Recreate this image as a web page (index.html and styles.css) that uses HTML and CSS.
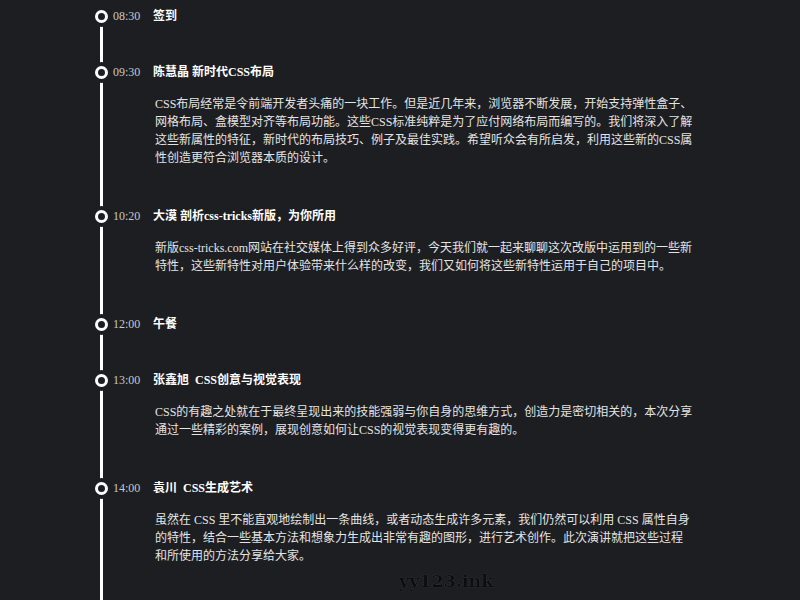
FILE: index.html
```html
<!DOCTYPE html>
<html>

<head>
    <meta charset="utf-8">
    <title>日程</title>
    <link rel="stylesheet" href="styles.css">
</head>

<body>
    <div class="timeline">
        <div class="item">
            <div class="head"><span class="dot"></span><span class="time">08:30</span><span class="title">签到</span></div>
        </div>
        <div class="item">
            <div class="head"><span class="dot"></span><span class="time">09:30</span><span class="title">陈慧晶 新时代CSS布局</span></div>
            <p class="desc">CSS布局经常是令前端开发者头痛的一块工作。但是近几年来，浏览器不断发展，开始支持弹性盒子、网格布局、盒模型对齐等布局功能。这些CSS标准纯粹是为了应付网络布局而编写的。我们将深入了解这些新属性的特征，新时代的布局技巧、例子及最佳实践。希望听众会有所启发，利用这些新的CSS属性创造更符合浏览器本质的设计。</p>
        </div>
        <div class="item">
            <div class="head"><span class="dot"></span><span class="time">10:20</span><span class="title">大漠 剖析css-tricks新版，为你所用</span></div>
            <p class="desc">新版css-tricks.com网站在社交媒体上得到众多好评，今天我们就一起来聊聊这次改版中运用到的一些新特性，这些新特性对用户体验带来什么样的改变，我们又如何将这些新特性运用于自己的项目中。</p>
        </div>
        <div class="item">
            <div class="head"><span class="dot"></span><span class="time">12:00</span><span class="title">午餐</span></div>
        </div>
        <div class="item">
            <div class="head"><span class="dot"></span><span class="time">13:00</span><span class="title">张鑫旭&nbsp; CSS创意与视觉表现</span></div>
            <p class="desc">CSS的有趣之处就在于最终呈现出来的技能强弱与你自身的思维方式，创造力是密切相关的，本次分享通过一些精彩的案例，展现创意如何让CSS的视觉表现变得更有趣的。</p>
        </div>
        <div class="item">
            <div class="head"><span class="dot"></span><span class="time">14:00</span><span class="title">袁川&nbsp; CSS生成艺术</span></div>
            <p class="desc">虽然在 CSS 里不能直观地绘制出一条曲线，或者动态生成许多元素，我们仍然可以利用 CSS 属性自身的特性，结合一些基本方法和想象力生成出非常有趣的图形，进行艺术创作。此次演讲就把这些过程和所使用的方法分享给大家。</p>
        </div>
        <div class="item">
            <div class="head"><span class="dot"></span><span class="time">15:00</span><span class="title">茶歇</span></div>
        </div>
        <div class="item">
            <div class="head"><span class="dot"></span><span class="time">15:30</span><span class="title">自由交流</span></div>
        </div>
        <div class="item">
            <div class="head"><span class="dot"></span><span class="time">16:30</span><span class="title">抽奖</span></div>
        </div>
        <div class="item">
            <div class="head"><span class="dot"></span><span class="time">17:00</span><span class="title">活动结束</span></div>
        </div>
    </div>

    <div class="watermark">yy123.ink</div>
</body>

</html>
```

FILE: styles.css
```css
body {
    margin: 0;
    background-color: #1c1e22;
    color: #e4e4e4;
}

.timeline {
    margin: 7px 0 220px 100px;
    border-left: 3px solid #fff;
}

.item {
    padding-bottom: 38px;
}

.head {
    display: flex;
    align-items: center;
    height: 18px;
    font-family: "Liberation Serif", "Noto Sans CJK SC", serif;
    font-size: 12px;
    line-height: 18px;
}

.dot {
    width: 7px;
    height: 7px;
    border: 3px solid #fff;
    border-radius: 50%;
    background-color: #1c1e22;
    box-shadow: 0 0 0 4px #1c1e22;
    margin-left: -8px;
    flex-shrink: 0;
}

.time {
    width: 40px;
    margin-left: 5px;
    color: #c8c8c8;
}

.title {
    font-weight: bold;
    color: #fff;
    white-space: pre;
}

.desc {
    width: 538.5px;
    margin: 14px 0 2px 52px;
    font-family: "Liberation Serif", "Noto Sans CJK SC", serif;
    font-size: 12px;
    line-height: 18px;
    text-autospace: no-autospace;
}

.watermark {
    position: fixed;
    left: 399px;
    top: 571px;
    font-family: "DejaVu Serif", serif;
    font-weight: bold;
    font-size: 17.5px;
    line-height: 20px;
    color: #0c0d0f;
    text-shadow: 0 0 1px rgba(255, 255, 255, 0.25);
}
```
